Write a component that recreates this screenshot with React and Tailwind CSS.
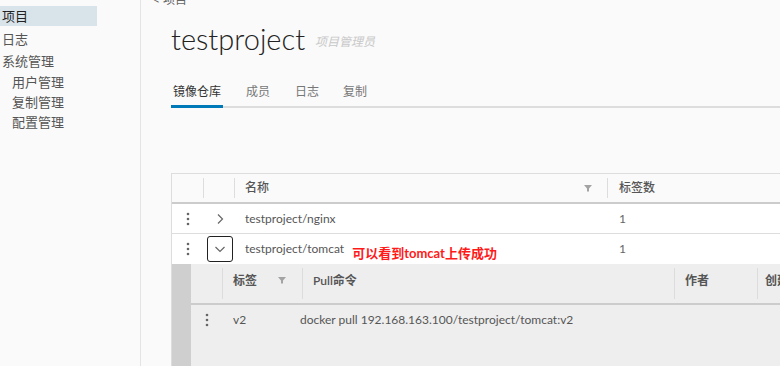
import React from "react";

const Kebab = ({ className = "" }) => (
  <svg width="4" height="14" viewBox="0 0 4 14" className={className}>
    <circle cx="2" cy="2" r="1.3" fill="#666" />
    <circle cx="2" cy="7" r="1.3" fill="#666" />
    <circle cx="2" cy="12" r="1.3" fill="#666" />
  </svg>
);

const ChevronRight = () => (
  <svg width="10" height="12" viewBox="0 0 10 12">
    <path d="M3 1.5 L7.5 6 L3 10.5" fill="none" stroke="#666" strokeWidth="1.2" />
  </svg>
);

const ChevronDown = () => (
  <svg width="12" height="10" viewBox="0 0 12 10">
    <path d="M1.5 3 L6 7.5 L10.5 3" fill="none" stroke="#666" strokeWidth="1.2" />
  </svg>
);

const Filter = () => (
  <svg width="8" height="8" viewBox="0 0 8 8">
    <path d="M0 1 H8 L5 4.5 V7.5 H3 V4.5 Z" fill="#a3a3a3" />
  </svg>
);

export default function App() {
  return (
    <div className="w-[780px] h-[366px] overflow-hidden flex bg-[#fafafa] font-['Lato','Noto_Sans_CJK_SC',sans-serif] text-[#565656]">
      <aside className="w-[141px] shrink-0 border-r border-[#e4e4e4] pt-[6px] text-[13px] text-[#555]">
        <div className="w-[97px] h-[20px] bg-[#d9e4ea] pl-[2px] leading-[20px] text-[#222]">项目</div>
        <div className="h-[22px] pl-[2px] leading-[22px] mt-[2px]">日志</div>
        <div className="h-[22px] pl-[2px] leading-[22px]">系统管理</div>
        <div className="h-[20px] pl-[12px] leading-[20px]">用户管理</div>
        <div className="h-[20px] pl-[12px] leading-[20px]">复制管理</div>
        <div className="h-[20px] pl-[12px] leading-[20px]">配置管理</div>
      </aside>
      <main className="flex-1 min-w-0 pl-[30px] overflow-hidden">
        <div className="h-[23px] -ml-[18px]">
          <div className="text-[12px] leading-[12px] -mt-[6px] text-[#666]">&lt; 项目</div>
        </div>
        <div className="h-[44px] flex items-center gap-[10px]">
          <span className="text-[29px] font-light text-[#222] leading-[36px]">testproject</span>
          <span className="text-[12px] italic text-[#c8c8c8] mt-[6px]">项目管理员</span>
        </div>
        <div className="mt-[16px] flex border-b-[2px] border-[#dddddd] h-[31px] text-[12px] w-[700px]">
          <div className="relative flex items-center px-[2px] text-[#333]">
            镜像仓库
            <div className="absolute left-0 right-0 -bottom-[2px] h-[3px] bg-[#0079b8]" />
          </div>
          <div className="flex items-center ml-[23px] text-[#777]">成员</div>
          <div className="flex items-center ml-[25px] text-[#777]">日志</div>
          <div className="flex items-center ml-[24px] text-[#777]">复制</div>
        </div>

        <div className="mt-[65px] w-[720px] border border-[#dddddd] text-[12px]">
          <div className="h-[30px] flex items-center border-b-[2px] border-[#cccccc] bg-[#fafafa] font-medium text-[#555]">
            <div className="w-[32px] h-[20px] border-r border-[#dddddd]" />
            <div className="w-[31px] h-[20px] border-r border-[#dddddd]" />
            <div className="w-[373px] h-[20px] border-r border-[#dddddd] flex items-center justify-between pl-[10px] pr-[15px]">
              <span>名称</span>
              <Filter />
            </div>
            <div className="pl-[11px]">标签数</div>
          </div>
          <div className="h-[30px] flex items-center bg-white border-b border-[#dddddd]">
            <div className="w-[32px] flex justify-center"><Kebab /></div>
            <div className="w-[31px] flex justify-center"><ChevronRight /></div>
            <div className="w-[373px] pl-[10px]">testproject/nginx</div>
            <div className="pl-[11px] text-[#666]">1</div>
          </div>
          <div className="h-[30px] flex items-center bg-white">
            <div className="w-[32px] flex justify-center"><Kebab /></div>
            <div className="w-[31px] flex justify-center">
              <div className="w-[26px] h-[26px] border-[1.5px] border-[#222] rounded-[3px] flex items-center justify-center">
                <ChevronDown />
              </div>
            </div>
            <div className="w-[373px] pl-[10px] flex items-center">
              <span>testproject/tomcat</span>
              <span className="ml-[8px] mt-[10px] text-[13px] font-bold text-[#ff1a1a]">可以看到tomcat上传成功</span>
            </div>
            <div className="pl-[11px] text-[#666]">1</div>
          </div>
          <div className="flex h-[110px]">
            <div className="w-[19px] bg-[#cfcfcf]" />
            <div className="flex-1 bg-[#eeeeee]">
              <div className="h-[41px] flex items-center border-b-[2px] border-[#cccccc] font-semibold text-[#555]">
                <div className="w-[32px] h-[31px] border-r border-[#dcdcdc]" />
                <div className="w-[80px] h-[31px] border-r border-[#dcdcdc] flex justify-between pl-[10px] pr-[16px] pt-[4px]">
                  <span>标签</span>
                  <span className="mt-[4px]"><Filter /></span>
                </div>
                <div className="w-[372px] h-[31px] border-r border-[#dcdcdc] pl-[10px] pt-[4px]">Pull命令</div>
                <div className="w-[83px] h-[31px] border-r border-[#dcdcdc] pl-[10px] pt-[4px]">作者</div>
                <div className="h-[31px] pl-[7px] pt-[4px]">创建时间</div>
              </div>
              <div className="h-[30px] flex items-center">
                <div className="w-[32px] flex justify-center"><Kebab /></div>
                <div className="w-[77px] pl-[10px]">v2</div>
                <div>docker pull 192.168.163.100/testproject/tomcat:v2</div>
              </div>
            </div>
          </div>
        </div>
      </main>
    </div>
  );
}
